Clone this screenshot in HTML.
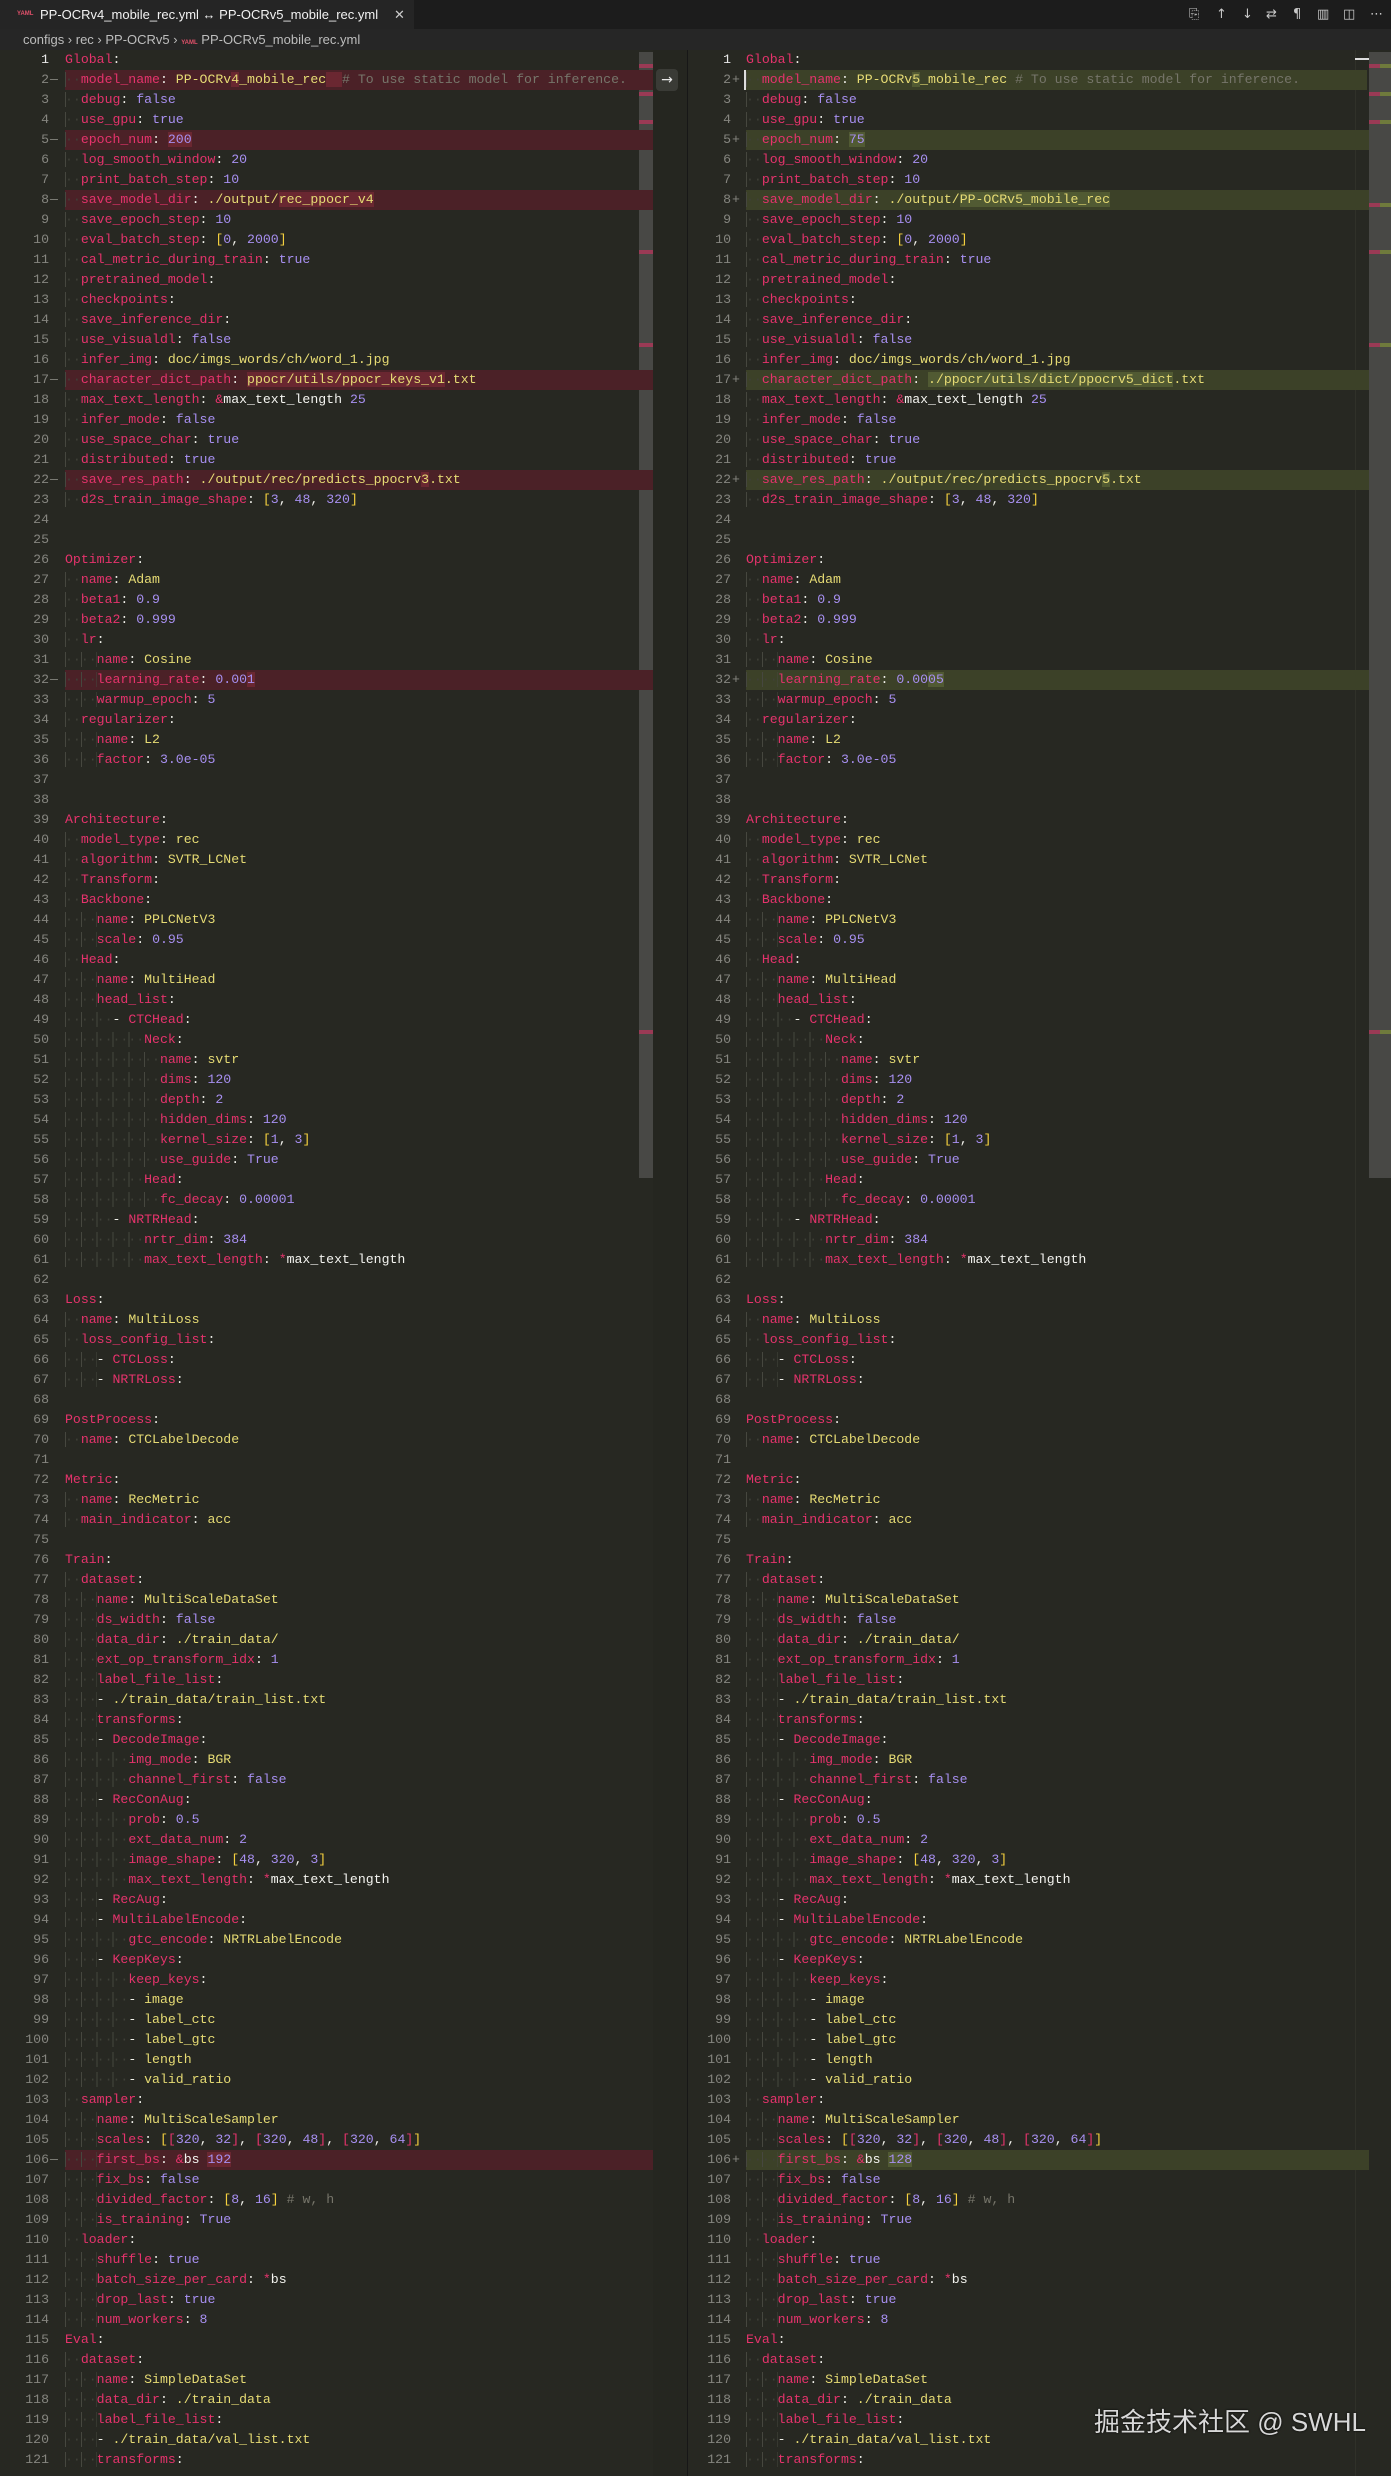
<!DOCTYPE html>
<html><head><meta charset="utf-8">
<style>
*{margin:0;padding:0;box-sizing:border-box}
html,body{width:1391px;height:2476px;overflow:hidden;background:#272822}
body{position:relative;font-family:"Liberation Mono",monospace;font-size:13.2px;color:#f0f0ea}
.tabbar{position:absolute;left:0;top:0;width:1391px;height:29px;background:#1c1c1c}
.tab{position:absolute;left:0;top:0;width:414px;height:29px;background:#252525;font-family:"Liberation Sans",sans-serif;font-size:13px;color:#f2f2f2;line-height:29px;padding-left:40px}
.tab .yml{position:absolute;left:17px;top:0;font-size:6px;color:#e0506a;font-weight:bold}
.tab .tx{position:absolute;left:394px;top:0;color:#ccc}
.icons{position:absolute;top:0;height:29px;line-height:29px;font-family:"DejaVu Sans",sans-serif;font-size:13px;color:#c8c8c8}
.crumb{position:absolute;left:0;top:29px;width:1391px;height:21px;background:#262626;font-family:"Liberation Sans",sans-serif;font-size:13px;color:#bdbdbd;line-height:21px;padding-left:23px}
.crumb .yml{font-size:6px;color:#e0506a;font-weight:bold}
.gut{position:absolute;top:50px;text-align:right;color:#85857f;line-height:20px}
.mk{position:absolute;top:50px;color:#85857f;line-height:20px}
.code{position:absolute;top:50px;line-height:20px}
.code div{height:20px;white-space:pre}
.L div{width:588px}.R div{width:623px}
.r{background:#4b2127}.g{background:#3c4128}
.x{background:#6a2731}.a{background:#515a33}
.k{color:#e5336c}.s{color:#e6db74}.n{color:#a78ff0}.c{color:#76756a}.y{color:#f4d03f}.w{color:#f4f4f0}
i{font-style:normal;color:#3f4038;background:repeating-linear-gradient(90deg,#46473f 0 1px,transparent 1px 15.84px)}
.sb{position:absolute;background:#484845}
.mark{position:absolute;height:4px}
</style></head><body>
<div class="tabbar"></div>
<div class="tab"><span class="yml">YAML</span>PP-OCRv4_mobile_rec.yml ↔ PP-OCRv5_mobile_rec.yml<span class="tx">✕</span></div>
<div class="icons" style="left:1189px">⎘</div>
<div class="icons" style="left:1216px">↑</div>
<div class="icons" style="left:1242px">↓</div>
<div class="icons" style="left:1266px">⇄</div>
<div class="icons" style="left:1293px">¶</div>
<div class="icons" style="left:1317px">▥</div>
<div class="icons" style="left:1343px">◫</div>
<div class="icons" style="left:1370px">⋯</div>
<div class="crumb">configs › rec › PP-OCRv5 › <span class="yml">YAML</span> PP-OCRv5_mobile_rec.yml</div>

<div style="position:absolute;left:653px;top:50px;width:34px;height:2426px;background:#252620"></div>
<div style="position:absolute;left:687px;top:50px;width:1px;height:2426px;background:#171717"></div>
<div class="sb" style="left:639px;top:52px;width:14px;height:1126px"></div>
<div style="position:absolute;left:656px;top:69px;width:22px;height:22px;background:#3a3b36;border-radius:4px;color:#e8e8e8;font-family:'DejaVu Sans',sans-serif;font-size:14px;text-align:center;line-height:22px">→</div>
<div style="position:absolute;left:1355px;top:50px;width:1px;height:2426px;background:#303129"></div>
<div class="sb" style="left:1369px;top:52px;width:22px;height:1126px"></div>
<div style="position:absolute;left:1355px;top:58px;width:14px;height:2px;background:#ddd"></div>

<div class="mark" style="left:639px;top:64px;width:14px;background:#9a3a55"></div>
<div class="mark" style="left:639px;top:92px;width:14px;background:#9a3a55"></div>
<div class="mark" style="left:639px;top:120px;width:14px;background:#9a3a55"></div>
<div class="mark" style="left:639px;top:203px;width:14px;background:#9a3a55"></div>
<div class="mark" style="left:639px;top:250px;width:14px;background:#9a3a55"></div>
<div class="mark" style="left:639px;top:343px;width:14px;background:#9a3a55"></div>
<div class="mark" style="left:639px;top:1030px;width:14px;background:#9a3a55"></div>
<div class="mark" style="left:1369px;top:64px;width:11px;background:#9a3a55"></div><div class="mark" style="left:1380px;top:64px;width:11px;background:#6f7a3c"></div>
<div class="mark" style="left:1369px;top:92px;width:11px;background:#9a3a55"></div><div class="mark" style="left:1380px;top:92px;width:11px;background:#6f7a3c"></div>
<div class="mark" style="left:1369px;top:120px;width:11px;background:#9a3a55"></div><div class="mark" style="left:1380px;top:120px;width:11px;background:#6f7a3c"></div>
<div class="mark" style="left:1369px;top:203px;width:11px;background:#9a3a55"></div><div class="mark" style="left:1380px;top:203px;width:11px;background:#6f7a3c"></div>
<div class="mark" style="left:1369px;top:250px;width:11px;background:#9a3a55"></div><div class="mark" style="left:1380px;top:250px;width:11px;background:#6f7a3c"></div>
<div class="mark" style="left:1369px;top:343px;width:11px;background:#9a3a55"></div><div class="mark" style="left:1380px;top:343px;width:11px;background:#6f7a3c"></div>
<div class="mark" style="left:1369px;top:1030px;width:11px;background:#9a3a55"></div><div class="mark" style="left:1380px;top:1030px;width:11px;background:#6f7a3c"></div>

<div class="gut" style="left:0;width:49px"><span style="color:#e8e8e8">1</span><br>2<br>3<br>4<br>5<br>6<br>7<br>8<br>9<br>10<br>11<br>12<br>13<br>14<br>15<br>16<br>17<br>18<br>19<br>20<br>21<br>22<br>23<br>24<br>25<br>26<br>27<br>28<br>29<br>30<br>31<br>32<br>33<br>34<br>35<br>36<br>37<br>38<br>39<br>40<br>41<br>42<br>43<br>44<br>45<br>46<br>47<br>48<br>49<br>50<br>51<br>52<br>53<br>54<br>55<br>56<br>57<br>58<br>59<br>60<br>61<br>62<br>63<br>64<br>65<br>66<br>67<br>68<br>69<br>70<br>71<br>72<br>73<br>74<br>75<br>76<br>77<br>78<br>79<br>80<br>81<br>82<br>83<br>84<br>85<br>86<br>87<br>88<br>89<br>90<br>91<br>92<br>93<br>94<br>95<br>96<br>97<br>98<br>99<br>100<br>101<br>102<br>103<br>104<br>105<br>106<br>107<br>108<br>109<br>110<br>111<br>112<br>113<br>114<br>115<br>116<br>117<br>118<br>119<br>120<br>121</div>
<div class="gut" style="left:688px;width:43px"><span style="color:#e8e8e8">1</span><br>2<br>3<br>4<br>5<br>6<br>7<br>8<br>9<br>10<br>11<br>12<br>13<br>14<br>15<br>16<br>17<br>18<br>19<br>20<br>21<br>22<br>23<br>24<br>25<br>26<br>27<br>28<br>29<br>30<br>31<br>32<br>33<br>34<br>35<br>36<br>37<br>38<br>39<br>40<br>41<br>42<br>43<br>44<br>45<br>46<br>47<br>48<br>49<br>50<br>51<br>52<br>53<br>54<br>55<br>56<br>57<br>58<br>59<br>60<br>61<br>62<br>63<br>64<br>65<br>66<br>67<br>68<br>69<br>70<br>71<br>72<br>73<br>74<br>75<br>76<br>77<br>78<br>79<br>80<br>81<br>82<br>83<br>84<br>85<br>86<br>87<br>88<br>89<br>90<br>91<br>92<br>93<br>94<br>95<br>96<br>97<br>98<br>99<br>100<br>101<br>102<br>103<br>104<br>105<br>106<br>107<br>108<br>109<br>110<br>111<br>112<br>113<br>114<br>115<br>116<br>117<br>118<br>119<br>120<br>121</div>
<div class="mk" style="left:50px;top:70px">—</div><div class="mk" style="left:50px;top:130px">—</div><div class="mk" style="left:50px;top:190px">—</div><div class="mk" style="left:50px;top:370px">—</div><div class="mk" style="left:50px;top:470px">—</div><div class="mk" style="left:50px;top:670px">—</div><div class="mk" style="left:50px;top:2150px">—</div>
<div class="mk" style="left:732px;top:70px">+</div><div class="mk" style="left:732px;top:130px">+</div><div class="mk" style="left:732px;top:190px">+</div><div class="mk" style="left:732px;top:370px">+</div><div class="mk" style="left:732px;top:470px">+</div><div class="mk" style="left:732px;top:670px">+</div><div class="mk" style="left:732px;top:2150px">+</div>

<div class="code L" style="left:65px">
<div><span class="k">Global</span>:</div>
<div class="r"><i>··</i><span class="k">model_name</span>: <span class="s">PP-OCRv<span class="x">4</span>_mobile_rec</span><span class="x">  </span><span class="c"># To use static model for inference.</span></div>
<div><i>··</i><span class="k">debug</span>: <span class="n">false</span></div>
<div><i>··</i><span class="k">use_gpu</span>: <span class="n">true</span></div>
<div class="r"><i>··</i><span class="k">epoch_num</span>: <span class="n x">200</span></div>
<div><i>··</i><span class="k">log_smooth_window</span>: <span class="n">20</span></div>
<div><i>··</i><span class="k">print_batch_step</span>: <span class="n">10</span></div>
<div class="r"><i>··</i><span class="k">save_model_dir</span>: <span class="s">./output/<span class="x">rec_ppocr_v4</span></span></div>
<div><i>··</i><span class="k">save_epoch_step</span>: <span class="n">10</span></div>
<div><i>··</i><span class="k">eval_batch_step</span>: <span class="y">[</span><span class="n">0</span>, <span class="n">2000</span><span class="y">]</span></div>
<div><i>··</i><span class="k">cal_metric_during_train</span>: <span class="n">true</span></div>
<div><i>··</i><span class="k">pretrained_model</span>:</div>
<div><i>··</i><span class="k">checkpoints</span>:</div>
<div><i>··</i><span class="k">save_inference_dir</span>:</div>
<div><i>··</i><span class="k">use_visualdl</span>: <span class="n">false</span></div>
<div><i>··</i><span class="k">infer_img</span>: <span class="s">doc/imgs_words/ch/word_1.jpg</span></div>
<div class="r"><i>··</i><span class="k">character_dict_path</span>: <span class="s"><span class="x">ppocr/utils/ppocr_keys_v1</span>.txt</span></div>
<div><i>··</i><span class="k">max_text_length</span>: <span class="k">&amp;</span><span class="w">max_text_length</span> <span class="n">25</span></div>
<div><i>··</i><span class="k">infer_mode</span>: <span class="n">false</span></div>
<div><i>··</i><span class="k">use_space_char</span>: <span class="n">true</span></div>
<div><i>··</i><span class="k">distributed</span>: <span class="n">true</span></div>
<div class="r"><i>··</i><span class="k">save_res_path</span>: <span class="s">./output/rec/predicts_ppocrv<span class="x">3</span>.txt</span></div>
<div><i>··</i><span class="k">d2s_train_image_shape</span>: <span class="y">[</span><span class="n">3</span>, <span class="n">48</span>, <span class="n">320</span><span class="y">]</span></div>
<div></div>
<div></div>
<div><span class="k">Optimizer</span>:</div>
<div><i>··</i><span class="k">name</span>: <span class="s">Adam</span></div>
<div><i>··</i><span class="k">beta1</span>: <span class="n">0.9</span></div>
<div><i>··</i><span class="k">beta2</span>: <span class="n">0.999</span></div>
<div><i>··</i><span class="k">lr</span>:</div>
<div><i>····</i><span class="k">name</span>: <span class="s">Cosine</span></div>
<div class="r"><i>····</i><span class="k">learning_rate</span>: <span class="n">0.00<span class="x">1</span></span></div>
<div><i>····</i><span class="k">warmup_epoch</span>: <span class="n">5</span></div>
<div><i>··</i><span class="k">regularizer</span>:</div>
<div><i>····</i><span class="k">name</span>: <span class="s">L2</span></div>
<div><i>····</i><span class="k">factor</span>: <span class="n">3.0e-05</span></div>
<div></div>
<div></div>
<div><span class="k">Architecture</span>:</div>
<div><i>··</i><span class="k">model_type</span>: <span class="s">rec</span></div>
<div><i>··</i><span class="k">algorithm</span>: <span class="s">SVTR_LCNet</span></div>
<div><i>··</i><span class="k">Transform</span>:</div>
<div><i>··</i><span class="k">Backbone</span>:</div>
<div><i>····</i><span class="k">name</span>: <span class="s">PPLCNetV3</span></div>
<div><i>····</i><span class="k">scale</span>: <span class="n">0.95</span></div>
<div><i>··</i><span class="k">Head</span>:</div>
<div><i>····</i><span class="k">name</span>: <span class="s">MultiHead</span></div>
<div><i>····</i><span class="k">head_list</span>:</div>
<div><i>······</i>- <span class="k">CTCHead</span>:</div>
<div><i>··········</i><span class="k">Neck</span>:</div>
<div><i>············</i><span class="k">name</span>: <span class="s">svtr</span></div>
<div><i>············</i><span class="k">dims</span>: <span class="n">120</span></div>
<div><i>············</i><span class="k">depth</span>: <span class="n">2</span></div>
<div><i>············</i><span class="k">hidden_dims</span>: <span class="n">120</span></div>
<div><i>············</i><span class="k">kernel_size</span>: <span class="y">[</span><span class="n">1</span>, <span class="n">3</span><span class="y">]</span></div>
<div><i>············</i><span class="k">use_guide</span>: <span class="n">True</span></div>
<div><i>··········</i><span class="k">Head</span>:</div>
<div><i>············</i><span class="k">fc_decay</span>: <span class="n">0.00001</span></div>
<div><i>······</i>- <span class="k">NRTRHead</span>:</div>
<div><i>··········</i><span class="k">nrtr_dim</span>: <span class="n">384</span></div>
<div><i>··········</i><span class="k">max_text_length</span>: <span class="k">*</span><span class="w">max_text_length</span></div>
<div></div>
<div><span class="k">Loss</span>:</div>
<div><i>··</i><span class="k">name</span>: <span class="s">MultiLoss</span></div>
<div><i>··</i><span class="k">loss_config_list</span>:</div>
<div><i>····</i>- <span class="k">CTCLoss</span>:</div>
<div><i>····</i>- <span class="k">NRTRLoss</span>:</div>
<div></div>
<div><span class="k">PostProcess</span>:</div>
<div><i>··</i><span class="k">name</span>: <span class="s">CTCLabelDecode</span></div>
<div></div>
<div><span class="k">Metric</span>:</div>
<div><i>··</i><span class="k">name</span>: <span class="s">RecMetric</span></div>
<div><i>··</i><span class="k">main_indicator</span>: <span class="s">acc</span></div>
<div></div>
<div><span class="k">Train</span>:</div>
<div><i>··</i><span class="k">dataset</span>:</div>
<div><i>····</i><span class="k">name</span>: <span class="s">MultiScaleDataSet</span></div>
<div><i>····</i><span class="k">ds_width</span>: <span class="n">false</span></div>
<div><i>····</i><span class="k">data_dir</span>: <span class="s">./train_data/</span></div>
<div><i>····</i><span class="k">ext_op_transform_idx</span>: <span class="n">1</span></div>
<div><i>····</i><span class="k">label_file_list</span>:</div>
<div><i>····</i>- <span class="s">./train_data/train_list.txt</span></div>
<div><i>····</i><span class="k">transforms</span>:</div>
<div><i>····</i>- <span class="k">DecodeImage</span>:</div>
<div><i>········</i><span class="k">img_mode</span>: <span class="s">BGR</span></div>
<div><i>········</i><span class="k">channel_first</span>: <span class="n">false</span></div>
<div><i>····</i>- <span class="k">RecConAug</span>:</div>
<div><i>········</i><span class="k">prob</span>: <span class="n">0.5</span></div>
<div><i>········</i><span class="k">ext_data_num</span>: <span class="n">2</span></div>
<div><i>········</i><span class="k">image_shape</span>: <span class="y">[</span><span class="n">48</span>, <span class="n">320</span>, <span class="n">3</span><span class="y">]</span></div>
<div><i>········</i><span class="k">max_text_length</span>: <span class="k">*</span><span class="w">max_text_length</span></div>
<div><i>····</i>- <span class="k">RecAug</span>:</div>
<div><i>····</i>- <span class="k">MultiLabelEncode</span>:</div>
<div><i>········</i><span class="k">gtc_encode</span>: <span class="s">NRTRLabelEncode</span></div>
<div><i>····</i>- <span class="k">KeepKeys</span>:</div>
<div><i>········</i><span class="k">keep_keys</span>:</div>
<div><i>········</i>- <span class="s">image</span></div>
<div><i>········</i>- <span class="s">label_ctc</span></div>
<div><i>········</i>- <span class="s">label_gtc</span></div>
<div><i>········</i>- <span class="s">length</span></div>
<div><i>········</i>- <span class="s">valid_ratio</span></div>
<div><i>··</i><span class="k">sampler</span>:</div>
<div><i>····</i><span class="k">name</span>: <span class="s">MultiScaleSampler</span></div>
<div><i>····</i><span class="k">scales</span>: <span class="y">[</span><span class="k">[</span><span class="n">320</span>, <span class="n">32</span><span class="k">]</span>, <span class="k">[</span><span class="n">320</span>, <span class="n">48</span><span class="k">]</span>, <span class="k">[</span><span class="n">320</span>, <span class="n">64</span><span class="k">]</span><span class="y">]</span></div>
<div class="r"><i>····</i><span class="k">first_bs</span>: <span class="k">&amp;</span><span class="w">bs</span> <span class="n x">192</span></div>
<div><i>····</i><span class="k">fix_bs</span>: <span class="n">false</span></div>
<div><i>····</i><span class="k">divided_factor</span>: <span class="y">[</span><span class="n">8</span>, <span class="n">16</span><span class="y">]</span> <span class="c"># w, h</span></div>
<div><i>····</i><span class="k">is_training</span>: <span class="n">True</span></div>
<div><i>··</i><span class="k">loader</span>:</div>
<div><i>····</i><span class="k">shuffle</span>: <span class="n">true</span></div>
<div><i>····</i><span class="k">batch_size_per_card</span>: <span class="k">*</span><span class="w">bs</span></div>
<div><i>····</i><span class="k">drop_last</span>: <span class="n">true</span></div>
<div><i>····</i><span class="k">num_workers</span>: <span class="n">8</span></div>
<div><span class="k">Eval</span>:</div>
<div><i>··</i><span class="k">dataset</span>:</div>
<div><i>····</i><span class="k">name</span>: <span class="s">SimpleDataSet</span></div>
<div><i>····</i><span class="k">data_dir</span>: <span class="s">./train_data</span></div>
<div><i>····</i><span class="k">label_file_list</span>:</div>
<div><i>····</i>- <span class="s">./train_data/val_list.txt</span></div>
<div><i>····</i><span class="k">transforms</span>:</div>
</div>

<div class="code R" style="left:746px">
<div><span class="k">Global</span>:</div>
<div class="g" style="border-left:2px solid #ddd;margin-left:-2px"><i>··</i><span class="k">model_name</span>: <span class="s">PP-OCRv<span class="a">5</span>_mobile_rec</span> <span class="c"># To use static model for inference.</span></div>
<div><i>··</i><span class="k">debug</span>: <span class="n">false</span></div>
<div><i>··</i><span class="k">use_gpu</span>: <span class="n">true</span></div>
<div class="g"><i>··</i><span class="k">epoch_num</span>: <span class="n a">75</span></div>
<div><i>··</i><span class="k">log_smooth_window</span>: <span class="n">20</span></div>
<div><i>··</i><span class="k">print_batch_step</span>: <span class="n">10</span></div>
<div class="g"><i>··</i><span class="k">save_model_dir</span>: <span class="s">./output/<span class="a">PP-OCRv5_mobile_rec</span></span></div>
<div><i>··</i><span class="k">save_epoch_step</span>: <span class="n">10</span></div>
<div><i>··</i><span class="k">eval_batch_step</span>: <span class="y">[</span><span class="n">0</span>, <span class="n">2000</span><span class="y">]</span></div>
<div><i>··</i><span class="k">cal_metric_during_train</span>: <span class="n">true</span></div>
<div><i>··</i><span class="k">pretrained_model</span>:</div>
<div><i>··</i><span class="k">checkpoints</span>:</div>
<div><i>··</i><span class="k">save_inference_dir</span>:</div>
<div><i>··</i><span class="k">use_visualdl</span>: <span class="n">false</span></div>
<div><i>··</i><span class="k">infer_img</span>: <span class="s">doc/imgs_words/ch/word_1.jpg</span></div>
<div class="g"><i>··</i><span class="k">character_dict_path</span>: <span class="s"><span class="a">./ppocr/utils/dict/ppocrv5_dict</span>.txt</span></div>
<div><i>··</i><span class="k">max_text_length</span>: <span class="k">&amp;</span><span class="w">max_text_length</span> <span class="n">25</span></div>
<div><i>··</i><span class="k">infer_mode</span>: <span class="n">false</span></div>
<div><i>··</i><span class="k">use_space_char</span>: <span class="n">true</span></div>
<div><i>··</i><span class="k">distributed</span>: <span class="n">true</span></div>
<div class="g"><i>··</i><span class="k">save_res_path</span>: <span class="s">./output/rec/predicts_ppocrv<span class="a">5</span>.txt</span></div>
<div><i>··</i><span class="k">d2s_train_image_shape</span>: <span class="y">[</span><span class="n">3</span>, <span class="n">48</span>, <span class="n">320</span><span class="y">]</span></div>
<div></div>
<div></div>
<div><span class="k">Optimizer</span>:</div>
<div><i>··</i><span class="k">name</span>: <span class="s">Adam</span></div>
<div><i>··</i><span class="k">beta1</span>: <span class="n">0.9</span></div>
<div><i>··</i><span class="k">beta2</span>: <span class="n">0.999</span></div>
<div><i>··</i><span class="k">lr</span>:</div>
<div><i>····</i><span class="k">name</span>: <span class="s">Cosine</span></div>
<div class="g"><i>····</i><span class="k">learning_rate</span>: <span class="n">0.00<span class="a">05</span></span></div>
<div><i>····</i><span class="k">warmup_epoch</span>: <span class="n">5</span></div>
<div><i>··</i><span class="k">regularizer</span>:</div>
<div><i>····</i><span class="k">name</span>: <span class="s">L2</span></div>
<div><i>····</i><span class="k">factor</span>: <span class="n">3.0e-05</span></div>
<div></div>
<div></div>
<div><span class="k">Architecture</span>:</div>
<div><i>··</i><span class="k">model_type</span>: <span class="s">rec</span></div>
<div><i>··</i><span class="k">algorithm</span>: <span class="s">SVTR_LCNet</span></div>
<div><i>··</i><span class="k">Transform</span>:</div>
<div><i>··</i><span class="k">Backbone</span>:</div>
<div><i>····</i><span class="k">name</span>: <span class="s">PPLCNetV3</span></div>
<div><i>····</i><span class="k">scale</span>: <span class="n">0.95</span></div>
<div><i>··</i><span class="k">Head</span>:</div>
<div><i>····</i><span class="k">name</span>: <span class="s">MultiHead</span></div>
<div><i>····</i><span class="k">head_list</span>:</div>
<div><i>······</i>- <span class="k">CTCHead</span>:</div>
<div><i>··········</i><span class="k">Neck</span>:</div>
<div><i>············</i><span class="k">name</span>: <span class="s">svtr</span></div>
<div><i>············</i><span class="k">dims</span>: <span class="n">120</span></div>
<div><i>············</i><span class="k">depth</span>: <span class="n">2</span></div>
<div><i>············</i><span class="k">hidden_dims</span>: <span class="n">120</span></div>
<div><i>············</i><span class="k">kernel_size</span>: <span class="y">[</span><span class="n">1</span>, <span class="n">3</span><span class="y">]</span></div>
<div><i>············</i><span class="k">use_guide</span>: <span class="n">True</span></div>
<div><i>··········</i><span class="k">Head</span>:</div>
<div><i>············</i><span class="k">fc_decay</span>: <span class="n">0.00001</span></div>
<div><i>······</i>- <span class="k">NRTRHead</span>:</div>
<div><i>··········</i><span class="k">nrtr_dim</span>: <span class="n">384</span></div>
<div><i>··········</i><span class="k">max_text_length</span>: <span class="k">*</span><span class="w">max_text_length</span></div>
<div></div>
<div><span class="k">Loss</span>:</div>
<div><i>··</i><span class="k">name</span>: <span class="s">MultiLoss</span></div>
<div><i>··</i><span class="k">loss_config_list</span>:</div>
<div><i>····</i>- <span class="k">CTCLoss</span>:</div>
<div><i>····</i>- <span class="k">NRTRLoss</span>:</div>
<div></div>
<div><span class="k">PostProcess</span>:</div>
<div><i>··</i><span class="k">name</span>: <span class="s">CTCLabelDecode</span></div>
<div></div>
<div><span class="k">Metric</span>:</div>
<div><i>··</i><span class="k">name</span>: <span class="s">RecMetric</span></div>
<div><i>··</i><span class="k">main_indicator</span>: <span class="s">acc</span></div>
<div></div>
<div><span class="k">Train</span>:</div>
<div><i>··</i><span class="k">dataset</span>:</div>
<div><i>····</i><span class="k">name</span>: <span class="s">MultiScaleDataSet</span></div>
<div><i>····</i><span class="k">ds_width</span>: <span class="n">false</span></div>
<div><i>····</i><span class="k">data_dir</span>: <span class="s">./train_data/</span></div>
<div><i>····</i><span class="k">ext_op_transform_idx</span>: <span class="n">1</span></div>
<div><i>····</i><span class="k">label_file_list</span>:</div>
<div><i>····</i>- <span class="s">./train_data/train_list.txt</span></div>
<div><i>····</i><span class="k">transforms</span>:</div>
<div><i>····</i>- <span class="k">DecodeImage</span>:</div>
<div><i>········</i><span class="k">img_mode</span>: <span class="s">BGR</span></div>
<div><i>········</i><span class="k">channel_first</span>: <span class="n">false</span></div>
<div><i>····</i>- <span class="k">RecConAug</span>:</div>
<div><i>········</i><span class="k">prob</span>: <span class="n">0.5</span></div>
<div><i>········</i><span class="k">ext_data_num</span>: <span class="n">2</span></div>
<div><i>········</i><span class="k">image_shape</span>: <span class="y">[</span><span class="n">48</span>, <span class="n">320</span>, <span class="n">3</span><span class="y">]</span></div>
<div><i>········</i><span class="k">max_text_length</span>: <span class="k">*</span><span class="w">max_text_length</span></div>
<div><i>····</i>- <span class="k">RecAug</span>:</div>
<div><i>····</i>- <span class="k">MultiLabelEncode</span>:</div>
<div><i>········</i><span class="k">gtc_encode</span>: <span class="s">NRTRLabelEncode</span></div>
<div><i>····</i>- <span class="k">KeepKeys</span>:</div>
<div><i>········</i><span class="k">keep_keys</span>:</div>
<div><i>········</i>- <span class="s">image</span></div>
<div><i>········</i>- <span class="s">label_ctc</span></div>
<div><i>········</i>- <span class="s">label_gtc</span></div>
<div><i>········</i>- <span class="s">length</span></div>
<div><i>········</i>- <span class="s">valid_ratio</span></div>
<div><i>··</i><span class="k">sampler</span>:</div>
<div><i>····</i><span class="k">name</span>: <span class="s">MultiScaleSampler</span></div>
<div><i>····</i><span class="k">scales</span>: <span class="y">[</span><span class="k">[</span><span class="n">320</span>, <span class="n">32</span><span class="k">]</span>, <span class="k">[</span><span class="n">320</span>, <span class="n">48</span><span class="k">]</span>, <span class="k">[</span><span class="n">320</span>, <span class="n">64</span><span class="k">]</span><span class="y">]</span></div>
<div class="g"><i>····</i><span class="k">first_bs</span>: <span class="k">&amp;</span><span class="w">bs</span> <span class="n a">128</span></div>
<div><i>····</i><span class="k">fix_bs</span>: <span class="n">false</span></div>
<div><i>····</i><span class="k">divided_factor</span>: <span class="y">[</span><span class="n">8</span>, <span class="n">16</span><span class="y">]</span> <span class="c"># w, h</span></div>
<div><i>····</i><span class="k">is_training</span>: <span class="n">True</span></div>
<div><i>··</i><span class="k">loader</span>:</div>
<div><i>····</i><span class="k">shuffle</span>: <span class="n">true</span></div>
<div><i>····</i><span class="k">batch_size_per_card</span>: <span class="k">*</span><span class="w">bs</span></div>
<div><i>····</i><span class="k">drop_last</span>: <span class="n">true</span></div>
<div><i>····</i><span class="k">num_workers</span>: <span class="n">8</span></div>
<div><span class="k">Eval</span>:</div>
<div><i>··</i><span class="k">dataset</span>:</div>
<div><i>····</i><span class="k">name</span>: <span class="s">SimpleDataSet</span></div>
<div><i>····</i><span class="k">data_dir</span>: <span class="s">./train_data</span></div>
<div><i>····</i><span class="k">label_file_list</span>:</div>
<div><i>····</i>- <span class="s">./train_data/val_list.txt</span></div>
<div><i>····</i><span class="k">transforms</span>:</div>
</div>

<div style="position:absolute;left:1094px;top:2402px;font-family:'Liberation Sans','Noto Sans CJK SC',sans-serif;font-size:26px;color:#d8d8d8;white-space:nowrap;text-shadow:0 0 2px #000">掘金技术社区 @ SWHL</div>
</body></html>
